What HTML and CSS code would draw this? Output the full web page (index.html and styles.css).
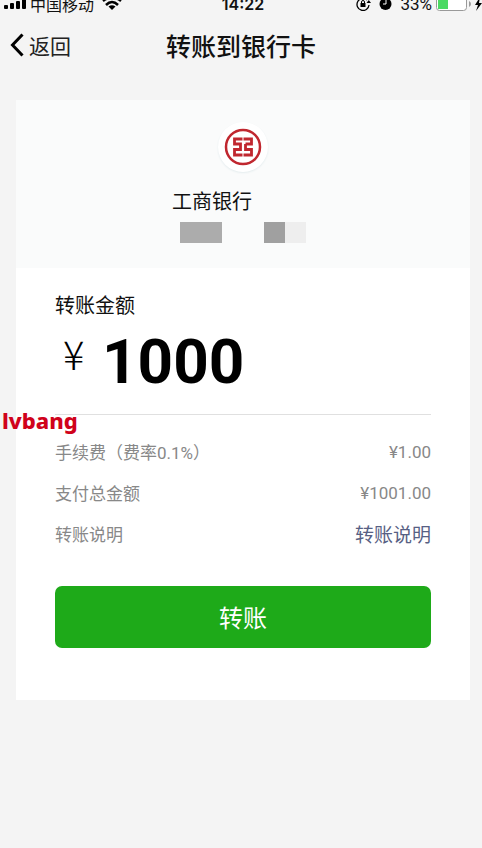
FILE: index.html
```
<!DOCTYPE html>
<html lang="zh-CN">
<head>
    <meta charset="UTF-8">
    <meta name="viewport" content="width=device-width, initial-scale=1.0">
    <title>转账到银行卡</title>
    <link rel="stylesheet" href="styles.css">
</head>
<body>
    <div class="status-bar">
        <div class="status-left">
            <svg class="signal" width="22" height="12" viewBox="0 0 22 12">
                <rect x="0" y="7" width="4" height="4" rx="1"/>
                <rect x="6" y="5" width="4" height="6" rx="1"/>
                <rect x="12" y="3" width="4" height="8" rx="1"/>
                <rect x="18" y="0" width="4" height="11" rx="1"/>
            </svg>
            <span>中国移动</span>
            <svg class="wifi" width="20" height="14" viewBox="0 0 20 14">
                <path d="M1 4Q10-3 19 4M4 8Q10 2 16 8" fill="none" stroke="#000" stroke-width="2.500"/>
                <path d="M10 13L6.500 9.500Q10 7 13.500 9.500Z"/>
            </svg>
        </div>
        <div class="status-time">14:22</div>
        <div class="status-right">
            <svg width="15" height="14" viewBox="0 0 15 14">
                <path d="M11 3A6 6 0 1 0 13 8" fill="none" stroke="#000" stroke-width="1.300"/>
                <path d="M10.500 6h4.500L12.800 3z"/>
                <rect x="4.500" y="6" width="5" height="4"/>
                <path d="M5.500 6V5a1.500 1.500 0 0 1 3 0v1" fill="none" stroke="#000"/>
            </svg>
            <svg width="13" height="14" viewBox="0 0 13 14">
                <circle cx="6.500" cy="7" r="6"/>
                <path d="M7 3v4H4" fill="none" stroke="#fff"/>
            </svg>
            <span>33%</span>
            <svg class="battery" width="35" height="16" viewBox="0 0 35 16">
                <rect x="0.500" y="0.500" width="30" height="14" rx="3" fill="#fff" stroke="#999"/>
                <rect x="2" y="2" width="10" height="11" fill="#4cd964"/>
                <path d="M33 5v6q2-1 2-3t-2-3z" fill="#999"/>
            </svg>
            <svg width="7" height="14" viewBox="0 0 7 14">
                <path d="M5 0L0 8h3L1 14L7 6H4Z"/>
            </svg>
        </div>
    </div>

    <header class="nav">
        <a class="back" href="#">
            <svg width="14" height="24" viewBox="0 0 14 24">
                <path d="M12.500 1.500L2.500 12L12.500 22.500" fill="none" stroke="#000" stroke-width="3"/>
            </svg>
            <span>返回</span>
        </a>
        <h1>转账到银行卡</h1>
    </header>

    <main class="card">
        <section class="bank">
            <div class="bank-logo">
                <svg width="38" height="38" viewBox="0 0 38 38" fill="none" stroke="#c0272f">
                    <circle cx="19" cy="19" r="17" stroke-width="2.500"/>
                    <path d="M18.500 11H10.500V16H16.500V21.500H10.500V27H18.500M19.500 11H27.500V16H21.500M19.500 27H27.500V21.500H21.500V16" stroke-width="2.800"/>
                </svg>
            </div>
            <div class="bank-name">工商银行</div>
            <div class="bank-mask">
                <span class="mask"></span>
                <span class="mask mask-split"></span>
            </div>
        </section>

        <section class="content">
            <h2>转账金额</h2>
            <div class="amount">
                <span class="yen">¥</span>
                <span class="value">1000</span>
            </div>
            <dl class="details">
                <div class="row">
                    <dt>手续费（费率0.1%）</dt>
                    <dd>¥1.00</dd>
                </div>
                <div class="row">
                    <dt>支付总金额</dt>
                    <dd>¥1001.00</dd>
                </div>
                <div class="row">
                    <dt>转账说明</dt>
                    <dd><a href="#">转账说明</a></dd>
                </div>
            </dl>
            <button class="submit" type="button">转账</button>
        </section>
        <div class="watermark">lvbang</div>
    </main>
</body>
</html>
```
FILE: styles.css
```
* {
    box-sizing: border-box;
}
body {
    margin: 0;
    background-color: #f4f4f4;
    color: #111;
    font-family: "Noto Sans CJK SC", sans-serif;
    overflow-x: hidden;
}

/* status bar, partly above the top edge */
.status-bar {
    display: grid;
    grid-template-columns: 1fr auto 1fr;
    align-items: center;
    height: 24px;
    margin-top: -8px;
    padding-left: 4px;
    font-size: 16px;
    line-height: 24px;
}
.status-left,
.status-right {
    display: flex;
    align-items: center;
}
.status-left {
    gap: 4px;
}
.wifi {
    margin-left: 4px;
}
.status-right {
    justify-content: flex-end;
    gap: 8px;
    font-family: Roboto, sans-serif;
    font-size: 17px;
}
.status-right .battery {
    margin-left: -4px;
    margin-right: -4px;
}
.status-time {
    font-family: Inter, sans-serif;
    font-weight: 600;
}

.nav {
    display: grid;
    grid-template-columns: 1fr auto 1fr;
    align-items: center;
    height: 58px;
    padding: 0 10px;
}
.back {
    display: flex;
    align-items: center;
    gap: 5px;
    color: #222;
    font-size: 21px;
    text-decoration: none;
}
.nav h1 {
    margin: 0;
    font-size: 25px;
    font-weight: 500;
    line-height: 36px;
}

.card {
    position: relative;
    margin: 26px 12px 0 16px;
    padding-bottom: 52px;
    background-color: #fff;
}
.bank {
    display: flex;
    flex-direction: column;
    align-items: center;
    height: 168px;
    padding-top: 22px;
    background-color: #fafbfb;
}
.bank-logo {
    display: flex;
    align-items: center;
    justify-content: center;
    width: 50px;
    height: 50px;
    border-radius: 50%;
    background-color: #fff;
    box-shadow: 0 1px 2px #e4ecee;
}
.bank-name {
    width: 142px;
    margin-top: 14px;
    font-size: 20px;
    line-height: 30px;
}
.bank-mask {
    display: flex;
    gap: 42px;
    margin-top: 6px;
}
.mask {
    width: 42px;
    height: 21px;
    background-color: #acacac;
}
.mask-split {
    background: linear-gradient(to right, #a0a0a0 50%, #eee 50%);
}

.content {
    padding: 22px 39px 0;
}
.content h2 {
    margin: 0;
    font-size: 20px;
    font-weight: 400;
    line-height: 30px;
}
.amount {
    display: flex;
    height: 95px;
    padding-left: 8px;
    border-bottom: 1px solid #e0e0e0;
    color: #000;
}
.yen {
    width: 39px;
    font-size: 40px;
    font-weight: 300;
    line-height: 66px;
}
.value {
    font-family: Roboto, sans-serif;
    font-size: 62px;
    font-weight: 700;
    line-height: 84px;
}
.details {
    margin: 16px 0 0;
}
.row {
    display: flex;
    align-items: center;
    justify-content: space-between;
    height: 41px;
    color: #888;
    font-family: Roboto, "Noto Sans CJK SC", sans-serif;
    font-size: 17px;
}
.row dd {
    margin: 0;
}
.row a {
    color: #576084;
    font-size: 19px;
    text-decoration: none;
}
.submit {
    display: block;
    width: 100%;
    height: 62px;
    margin-top: 32px;
    padding: 0 0 2px;
    border: 0;
    border-radius: 7px;
    background-color: #1eaa19;
    color: #fff;
    font-family: inherit;
    font-size: 24px;
}

.watermark {
    position: absolute;
    top: 304px;
    left: -14px;
    color: #d0021b;
    font-family: "Noto Sans", sans-serif;
    font-size: 22px;
    font-weight: 800;
    line-height: 32px;
}
```
